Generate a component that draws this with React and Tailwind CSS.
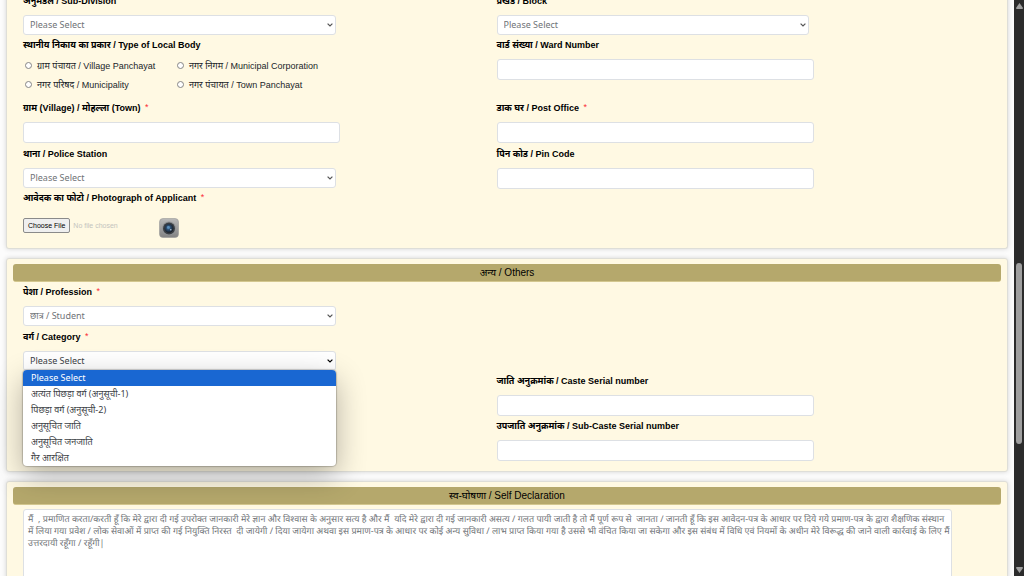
import { useId } from "react";

const controlClass =
  "block rounded-[3px] border border-[#dde0e4] bg-white px-[6px] outline-none";

function LabelText({ children, required }) {
  return (
    <>
      {children}
      {required && <span className="pl-[2px] align-top text-[9px] leading-[14px] font-normal text-red-500"> *</span>}
    </>
  );
}

function TextField({ label, required }) {
  const id = useId();
  return (
    <div>
      <label htmlFor={id} className="block h-4 text-[9px] leading-4 font-bold whitespace-nowrap text-black">
        <LabelText required={required}>{label}</LabelText>
      </label>
      <input id={id} type="text" className={`${controlClass} mt-[6px] h-[21px] w-[67%] text-[9px]`} />
    </div>
  );
}

function SelectField({ label, required, value, active, children }) {
  const id = useId();
  return (
    <div>
      <label htmlFor={id} className="block h-4 text-[9px] leading-4 font-bold whitespace-nowrap text-black">
        <LabelText required={required}>{label}</LabelText>
      </label>
      <div className="relative mt-[6px] w-[66%]">
        <select
          id={id}
          className={`${controlClass} h-5 w-full appearance-none font-['Noto_Sans',sans-serif] text-[9px] ${active ? "text-[#3c4146]" : "text-[#6f7377]"}`}
        >
          <option>{value}</option>
        </select>
        <svg
          viewBox="0 0 6 4"
          className={`pointer-events-none absolute top-2 right-[3px] h-1 w-[6px] ${active ? "text-black" : "text-[#555]"}`}
          fill="none"
          stroke="currentColor"
          strokeWidth="1.2"
        >
          <path d="M0.6 0.6 3 3 5.4 0.6" />
        </svg>
        {children}
      </div>
    </div>
  );
}

function Radio({ children }) {
  return (
    <label className="flex h-4 items-center gap-[5px] text-[9px] whitespace-nowrap text-[#212529]">
      <input
        type="radio"
        name="local-body"
        className="mb-[3px] ml-[2px] h-[7px] w-[7px] appearance-none rounded-full border border-[#868686] bg-white checked:bg-[#1967d2]"
      />
      {children}
    </label>
  );
}

function Card({ title, children, className }) {
  return (
    <section
      className={`rounded-[3px] border border-[#deded8] bg-[#fff9e3] px-[6px] shadow-[0_0_5px_rgba(0,0,0,0.16)] ${className}`}
    >
      {title && (
        <h2 className="mt-[5px] h-[18px] rounded-[3px] border-b border-[#d3c78f] bg-[#b5a86c] text-center text-[10px] leading-[17px] text-black">
          {title}
        </h2>
      )}
      {children}
    </section>
  );
}

const categories = [
  "Please Select",
  "अत्यंत पिछड़ा वर्ग (अनुसूची-1)",
  "पिछड़ा वर्ग (अनुसूची-2)",
  "अनुसूचित जाति",
  "अनुसूचित जनजाति",
  "गैर आरक्षित",
];

const declaration =
  "मैं  , प्रमाणित करता/करती हूँ कि मेरे द्वारा दी गई उपरोक्त जानकारी मेरे ज्ञान और विश्वास के अनुसार सत्य है और मैं  यदि मेरे द्वारा दी गई जानकारी असत्य / गलत पायी जाती है तो मैं पूर्ण रूप से  जानता / जानती हूँ कि इस आवेदन-पत्र के आधार पर दिये गये प्रमाण-पत्र के द्वारा शैक्षणिक संस्थान में लिया गया प्रवेश / लोक सेवाओं में प्राप्त की गई नियुक्ति निरस्त  दी जायेगी / दिया जायेगा अथवा इस प्रमाण-पत्र के आधार पर कोई अन्य सुविधा / लाभ प्राप्त किया गया है उससे भी वंचित किया जा सकेगा और इस संबंध में विधि एवं नियमों के अधीन मेरे विरूद्ध की जाने वाली कार्रवाई के लिए मैं उत्तरदायी रहूँगा / रहूँगी|";

function CameraIcon() {
  return (
    <svg viewBox="0 0 20 20" className="h-5 w-5">
      <defs>
        <linearGradient id="body" x1="0" y1="0" x2="0" y2="1">
          <stop offset="0" stopColor="#b9b9b9" />
          <stop offset="1" stopColor="#828282" />
        </linearGradient>
        <radialGradient id="lens" cx="0.45" cy="0.42" r="0.6">
          <stop offset="0" stopColor="#4f86b4" />
          <stop offset="0.45" stopColor="#2b4868" />
          <stop offset="1" stopColor="#15191f" />
        </radialGradient>
      </defs>
      <rect x="0.5" y="0.5" width="19" height="19" rx="3.5" fill="url(#body)" stroke="#999" strokeWidth="0.6" />
      <circle cx="10" cy="10.4" r="6.8" fill="#8f9296" />
      <circle cx="10" cy="10.4" r="6" fill="#3a3e43" />
      <circle cx="10" cy="10.4" r="4.4" fill="url(#lens)" />
      <circle cx="9.4" cy="9.4" r="1.4" fill="#5b8fbb" />
      <circle cx="11.8" cy="11.8" r="0.8" fill="#b5c7d6" />
    </svg>
  );
}

export default function App() {
  return (
    <div className="flex h-screen overflow-hidden bg-[#fcfcfc] font-['Liberation_Sans','Noto_Sans',sans-serif]">
      <main className="-mt-[7px] min-w-0 flex-1 pr-[6px] pl-[6px]">
        <Card className="rounded-t-none border-t-0 pb-[10px]">
          <div className="grid grid-cols-2 grid-rows-[44px_63px_46px_44px_auto] pr-[31px] pl-[10px]">
            <SelectField label="अनुमंडल / Sub-Division" value="Please Select" />
            <SelectField label="प्रखंड / Block" value="Please Select" />
            <fieldset>
              <legend className="h-4 text-[9px] leading-4 font-bold text-black">
                स्थानीय निकाय का प्रकार / Type of Local Body
              </legend>
              <div className="mt-[6px] grid grid-cols-[152px_152px] gap-y-[3px]">
                <Radio>ग्राम पंचायत / Village Panchayat</Radio>
                <Radio>नगर निगम / Municipal Corporation</Radio>
                <Radio>नगर परिषद / Municipality</Radio>
                <Radio>नगर पंचायत / Town Panchayat</Radio>
              </div>
            </fieldset>
            <TextField label="वार्ड संख्या / Ward Number" />
            <TextField label="ग्राम (Village) / मोहल्ला (Town)" required />
            <TextField label="डाक घर / Post Office" required />
            <SelectField label="थाना / Police Station" value="Please Select" />
            <TextField label="पिन कोड / Pin Code" />
            <div>
              <label htmlFor="photo" className="block h-4 text-[9px] leading-4 font-bold text-black">
                <LabelText required>आवेदक का फोटो / Photograph of Applicant</LabelText>
              </label>
              <div className="mt-3 flex items-start">
                <input
                  id="photo"
                  type="file"
                  className="h-[15px] w-[136px] text-[7px] leading-[15px] text-[#c4c4be] file:mr-[3px] file:h-[15px] file:rounded-[2px] file:border file:border-solid file:border-[#8a8a8a] file:bg-[#efefef] file:px-[4px] file:text-[7px] file:leading-[13px] file:text-black"
                />
                <button type="button" aria-label="Camera">
                  <CameraIcon />
                </button>
              </div>
            </div>
          </div>
        </Card>

        <Card title="अन्य / Others" className="mt-[9px] pb-[10px]">
          <div className="grid grid-cols-2 grid-rows-[45px_44px_45px_auto] pt-[2px] pr-[31px] pl-[10px]">
            <SelectField label="पेशा / Profession" required value="छात्र / Student" />
            <div />
            <SelectField label="वर्ग / Category" required value="Please Select" active>
              <ul
                role="listbox"
                className="absolute top-[19px] right-0 left-0 z-10 overflow-hidden rounded-[4px] bg-white font-['Noto_Sans',sans-serif] text-[9px] leading-4 text-[#3c4146] shadow-[0_0_1px_1px_rgba(0,0,0,0.2),0_10px_30px_rgba(0,0,0,0.3)]"
              >
                {categories.map((name, i) => (
                  <li
                    key={name}
                    role="option"
                    aria-selected={i === 0}
                    className={`h-4 px-2 ${i === 0 ? "bg-[#1967d2] text-white" : ""}`}
                  >
                    {name}
                  </li>
                ))}
              </ul>
            </SelectField>
            <div />
            <div />
            <TextField label="जाति अनुक्रमांक / Caste Serial number" />
            <div />
            <TextField label="उपजाति अनुक्रमांक / Sub-Caste Serial number" />
          </div>
        </Card>

        <Card title="स्व-घोषणा / Self Declaration" className="mt-[9px]">
          <div className="pt-1 pr-[49px] pl-[10px]">
            <textarea
              aria-label="Self Declaration"
              defaultValue={declaration}
              className="block h-24 w-full resize-none rounded-[3px] border border-[#dde0e4] bg-white py-[3px] pr-0 pl-1 font-['Noto_Sans',sans-serif] text-[9px] leading-3 text-[#6f7377] outline-none [text-rendering:geometricPrecision]"
            />
          </div>
        </Card>
      </main>
      <aside className="flex w-[10px] shrink-0 flex-col items-center justify-between bg-[#2b2b2b] py-[3px]">
        <svg viewBox="0 0 7 6" className="h-[6px] w-[7px] shrink-0" fill="#9f9f9f">
          <path d="M3.5 0 7 5Q7 6 6 6H1Q0 6 0 5Z" />
        </svg>
        <div className="flex w-[6px] flex-1 flex-col">
          <div className="grow-[254]" />
          <div className="grow-[181] rounded-full bg-[#9f9f9f]" />
          <div className="grow-[123]" />
        </div>
        <svg viewBox="0 0 7 6" className="h-[6px] w-[7px] shrink-0" fill="#9f9f9f">
          <path d="M3.5 6 0 1Q0 0 1 0H6Q7 0 7 1Z" />
        </svg>
      </aside>
    </div>
  );
}
